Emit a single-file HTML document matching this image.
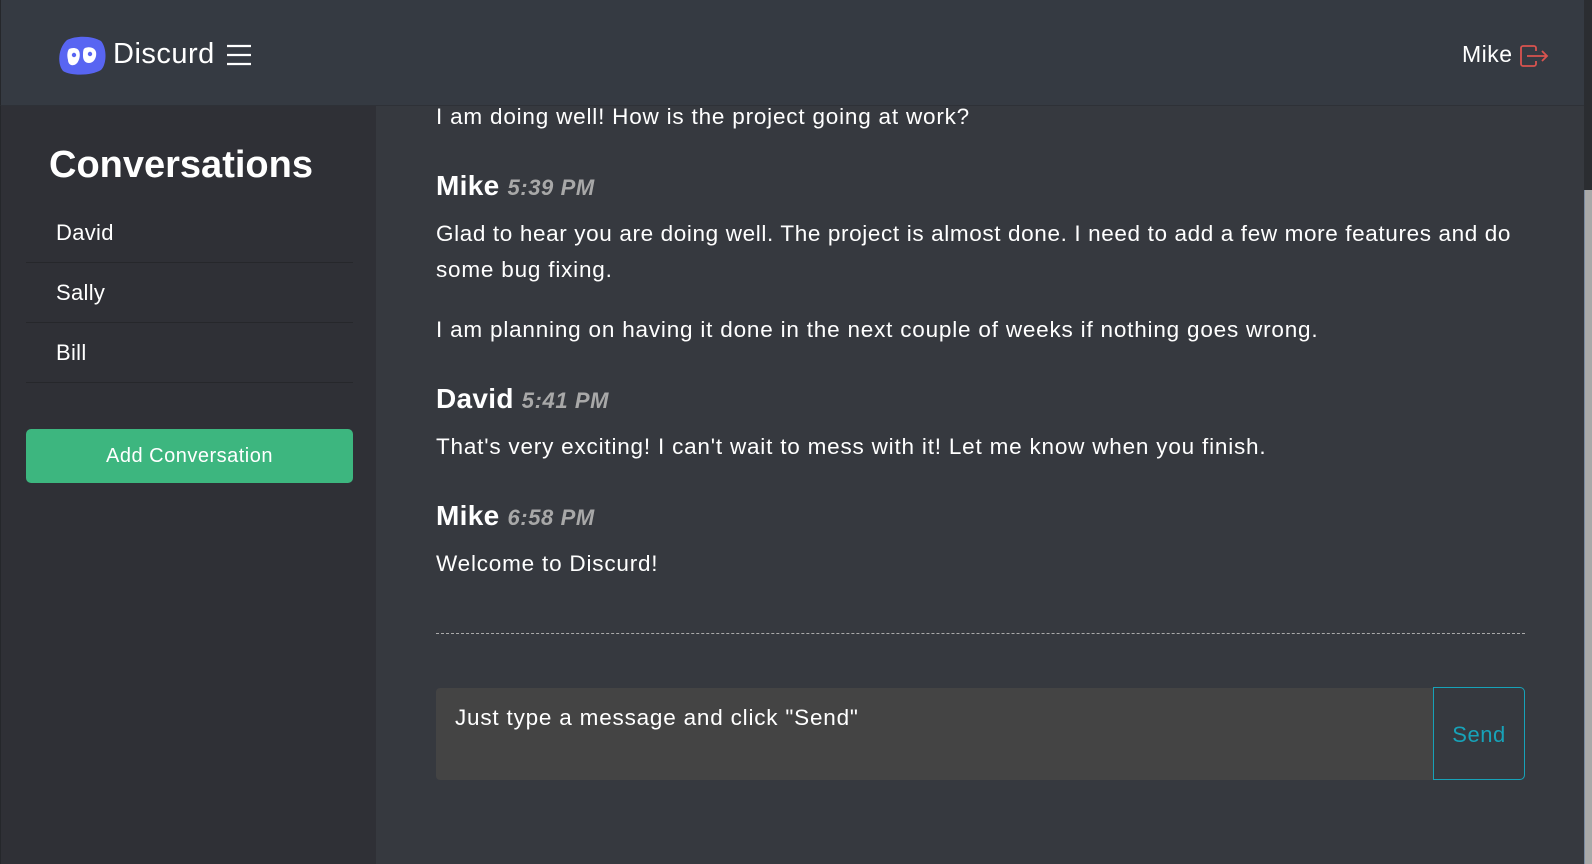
<!DOCTYPE html>
<html><head><meta charset="utf-8"><style>
*{margin:0;padding:0;box-sizing:border-box}
body{width:1592px;height:864px;overflow:hidden;background:#36393f;font-family:"Liberation Sans",sans-serif;color:#fff;position:relative}
.hdr{position:absolute;left:0;top:0;width:1584px;height:106px;background:#353a42;border-bottom:1px solid #2e3137;border-left:1px solid #25272b}
.side{position:absolute;left:0;top:106px;width:376px;height:758px;background:#2f3036;border-left:1px solid #25272b}
.main{position:absolute;left:376px;top:106px;width:1208px;height:758px;background:#36393f}
.sb{position:absolute;left:1584px;top:0;width:8px;height:864px;background:#2b2d31}
.thumb{position:absolute;left:1584px;top:190px;width:8px;height:674px;background:#a9a9a9;border-left:1px solid #7a8aa0}
.t{position:absolute;white-space:nowrap}
.item{position:absolute;left:25px;width:327px;height:60px;border-bottom:1px solid #26272b;font-size:22px;padding-left:30px;line-height:60px;letter-spacing:.3px}
.btn{position:absolute;left:25px;top:429px;width:327px;height:54px;background:#3db67f;border-radius:5px;text-align:center;line-height:54px;font-size:20px;letter-spacing:.5px}
.p{position:absolute;left:436px;font-size:22.5px;letter-spacing:.8px;white-space:nowrap}
.h{position:absolute;left:436px;font-size:28px;font-weight:bold;white-space:nowrap;letter-spacing:.3px}
.h i{font-size:22px;color:#a8a8a8;margin-left:8px;letter-spacing:.6px}
</style></head><body>
<div class="hdr"></div>
<svg style="position:absolute;left:57px;top:36px" width="50" height="40" viewBox="0 0 50 40">
<path d="M10 4 C20 -1 36 0 44 5 C50 12 50 28 44 34 C34 40 14 40 6 35 C0 28 1 12 10 4Z" fill="#5865f2"/>
<path d="M12 13 C16 11 21 12 22 15 C24 19 22 28 17 29 C13 30 11 27 11 24 C10 20 10 16 12 13Z" fill="#fff"/>
<path d="M28 12 C33 10 38 12 39 16 C40 21 37 27 32 27 C28 27 26 24 26 20 C26 16 26 13 28 12Z" fill="#fff"/>
<circle cx="17" cy="19" r="2.2" fill="#5865f2"/><circle cx="33" cy="18" r="2.2" fill="#5865f2"/>
</svg>
<div class="t" style="left:113px;top:38px;font-size:29px;letter-spacing:.5px">Discurd</div>
<svg style="position:absolute;left:226px;top:44px" width="26" height="22"><path d="M1 2H25M1 11H25M1 20H25" stroke="#fff" stroke-width="2.2"/></svg>
<div class="t" style="left:1462px;top:41px;font-size:23px;letter-spacing:.5px">Mike</div>
<svg style="position:absolute;left:1520px;top:44px" width="30" height="24" viewBox="0 0 30 24"><path d="M14 2H3a2 2 0 0 0-2 2v16a2 2 0 0 0 2 2h11a2 2 0 0 0 2-2v-3M16 7V4a2 2 0 0 0-2-2M7 12H27M22 7l5 5-5 5" fill="none" stroke="#d9534f" stroke-width="1.8"/></svg>
<div class="side">
<div class="t" style="left:48px;top:38px;font-size:38px;font-weight:bold">Conversations</div>
<div class="item" style="top:97px">David</div>
<div class="item" style="top:157px">Sally</div>
<div class="item" style="top:217px">Bill</div>
<div class="btn" style="top:323px">Add Conversation</div>
</div>
<div class="main"></div>
<div class="p" style="top:104px">I am doing well! How is the project going at work?</div>
<div class="h" style="top:170px">Mike<i>5:39 PM</i></div>
<div class="p" style="top:221px;letter-spacing:.63px">Glad to hear you are doing well. The project is almost done. I need to add a few more features and do</div>
<div class="p" style="top:257px">some bug fixing.</div>
<div class="p" style="top:317px">I am planning on having it done in the next couple of weeks if nothing goes wrong.</div>
<div class="h" style="top:383px">David<i>5:41 PM</i></div>
<div class="p" style="top:434px">That's very exciting! I can't wait to mess with it! Let me know when you finish.</div>
<div class="h" style="top:500px">Mike<i>6:58 PM</i></div>
<div class="p" style="top:551px">Welcome to Discurd!</div>
<div style="position:absolute;left:436px;top:633px;width:1089px;border-top:1px dashed #aaa"></div>
<div style="position:absolute;left:436px;top:688px;width:998px;height:92px;background:#444;border-radius:4px 0 0 4px"></div>
<div class="p" style="left:455px;top:705px">Just type a message and click "Send"</div>
<div style="position:absolute;left:1433px;top:687px;width:92px;height:93px;border:1px solid #17a2b8;border-radius:0 5px 5px 0;color:#17a2b8;font-size:22px;text-align:center;line-height:93px;letter-spacing:.5px">Send</div>
<div class="sb"></div><div class="thumb"></div>
</body></html>
